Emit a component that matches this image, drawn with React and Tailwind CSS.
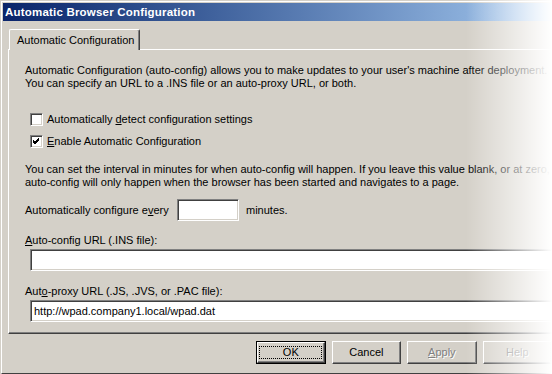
import React from "react";

const sunken =
  "border border-t-[#808080] border-l-[#808080] border-b-white border-r-white shadow-[inset_1px_1px_0_#404040,inset_-1px_-1px_0_#d4d0c8] bg-white";

function CheckBox({ checked }) {
  return (
    <div className={"w-[13px] h-[13px] shrink-0 relative " + sunken}>
      {checked && (
        <svg width="11" height="11" viewBox="0 0 11 11" className="absolute left-0 top-0">
          <path d="M2 4 L4 6 L8 2 M2 5 L4 7 L8 3 M2 6 L4 8 L8 4" stroke="#000" strokeWidth="1" fill="none" shapeRendering="crispEdges" />
        </svg>
      )}
    </div>
  );
}

function Button({ children, isDefault, disabled }) {
  const inner = (
    <div className="w-full h-full border border-t-white border-l-white border-r-[#404040] border-b-[#404040] shadow-[inset_-1px_-1px_0_#808080] flex items-center justify-center bg-[#d4d0c8]">
      {isDefault ? (
        <div className="border border-dotted border-black w-[63px] h-[13px] flex items-center justify-center leading-[13px]">
          {children}
        </div>
      ) : (
        <span
          className={
            disabled
              ? "text-[#808080] [text-shadow:1px_1px_0_#fff] leading-[13px]"
              : "leading-[13px]"
          }
        >
          {children}
        </span>
      )}
    </div>
  );
  return isDefault ? (
    <div className="w-[75px] h-[23px] border border-black">{inner}</div>
  ) : (
    <div className="w-[75px] h-[23px]">{inner}</div>
  );
}

export default function App() {
  return (
    <div className="w-[552px] h-[374px] bg-[#d4d0c8] relative overflow-hidden text-[11px] text-black font-['Liberation_Sans',Arial,sans-serif]">
      <div className="pt-[1px] pl-[1px] h-full">
        <div className="h-full border-t border-l border-white pt-[1px] pl-[1px] flex flex-col border-b border-b-[#404040]">
          {/* Title bar */}
          <div className="h-[18px] shrink-0 bg-linear-to-r from-[#0a246a] to-[#a6caf0] flex items-center pl-[2px]">
            <span className="text-white font-bold text-[11.5px] tracking-[0.2px] leading-[13px]">
              Automatic Browser Configuration
            </span>
          </div>

          {/* Tabs */}
          <div className="mt-[8px] ml-[5px] flex flex-col">
            <div className="flex pl-[1px]">
              <div className="relative z-10 w-[131px] h-[21px] bg-[#d4d0c8] border-t border-l border-white border-r border-r-[#404040] rounded-tl-[2px] rounded-tr-[2px] shadow-[inset_-1px_0_0_#808080] flex items-center pl-[7px] pt-[1px]">
                <span className="leading-[13px]">Automatic Configuration</span>
              </div>
            </div>
            <div className="-mt-[1px] w-[600px] h-[285px] border-t border-l border-white border-b border-b-[#404040] shadow-[inset_0_-1px_0_#808080] pl-[16px] pt-[14px] flex flex-col">
              <p className="leading-[13px] whitespace-nowrap">
                Automatic Configuration (auto-config) allows you to make updates to your user's machine after deployment.
                <br />
                You can specify an URL to a .INS file or an auto-proxy URL, or both.
              </p>

              <div className="mt-[23px] ml-[5px] flex items-center gap-[4px] h-[13px]">
                <CheckBox />
                <span className="leading-[13px]">
                  Automatically <span className="underline">d</span>etect configuration settings
                </span>
              </div>
              <div className="mt-[9px] ml-[5px] flex items-center gap-[4px] h-[13px]">
                <CheckBox checked />
                <span className="leading-[13px]">
                  <span className="underline">E</span>nable Automatic Configuration
                </span>
              </div>

              <p className="mt-[15px] leading-[13px] whitespace-nowrap">
                You can set the interval in minutes for when auto-config will happen. If you leave this value blank, or at zero,
                <br />
                auto-config will only happen when the browser has been started and navigates to a page.
              </p>

              <div className="mt-[10px] flex items-center h-[22px]">
                <span className="leading-[13px] w-[152px]">
                  Automatically configure e<span className="underline">v</span>ery
                </span>
                <div className={"w-[62px] h-[22px] " + sunken}></div>
                <span className="leading-[13px] ml-[7px]">minutes.</span>
              </div>

              <div className="mt-[13px] leading-[13px]">
                <span className="underline">A</span>uto-config URL (.INS file):
              </div>
              <div className={"mt-[2px] ml-[5px] h-[22px] w-[560px] " + sunken}></div>

              <div className="mt-[14px] leading-[13px]">
                Aut<span className="underline">o</span>-proxy URL (.JS, .JVS, or .PAC file):
              </div>
              <div className={"mt-[2px] ml-[5px] h-[22px] w-[560px] flex items-center pl-[3px] " + sunken}>
                <span className="leading-[13px]">http://wpad.company1.local/wpad.dat</span>
              </div>
            </div>
          </div>

          {/* Buttons */}
          <div className="mt-[7px] pl-[253px] flex gap-[6px]">
            <Button isDefault>OK</Button>
            <Button>Cancel</Button>
            <Button disabled>
              <span className="underline">A</span>pply
            </Button>
            <Button disabled>Help</Button>
          </div>
        </div>
      </div>

      {/* right-edge fade */}
      <div className="absolute top-0 bottom-0 right-0 w-[86px] bg-linear-to-r from-white/0 to-white pointer-events-none"></div>
    </div>
  );
}
